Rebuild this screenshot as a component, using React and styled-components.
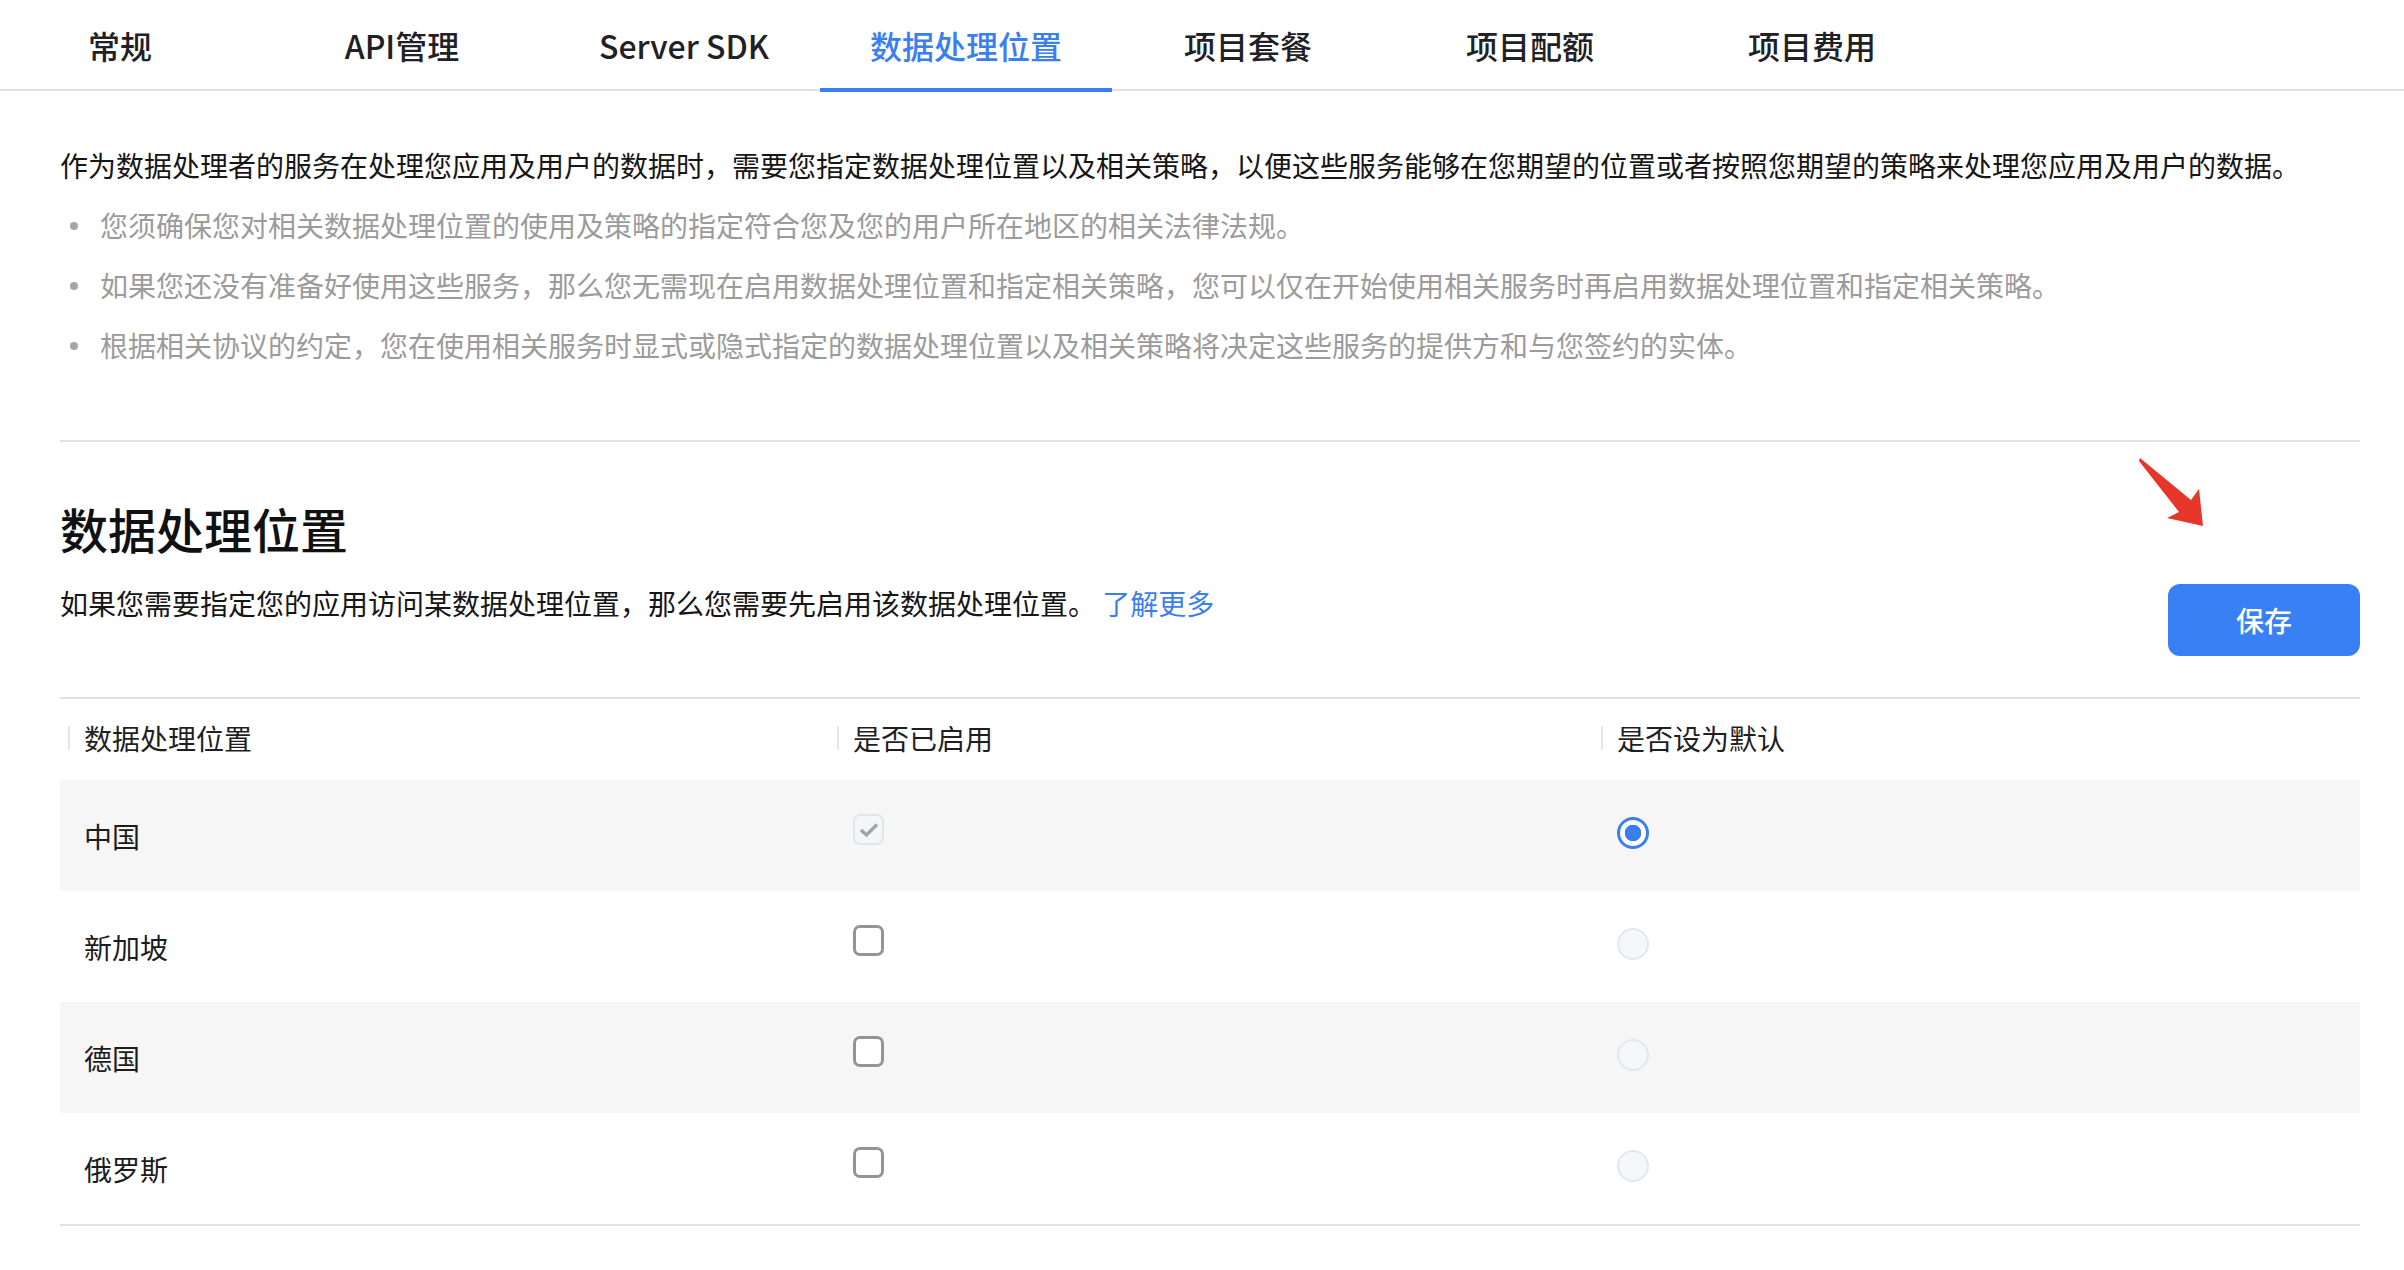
import React from "react";
import styled, { createGlobalStyle, css } from "styled-components";

const GlobalStyle = createGlobalStyle`
  html, body {
    margin: 0;
    padding: 0;
    background: #fff;
  }
  body {
    font-family: "Noto Sans CJK SC", "Noto Sans", sans-serif;
    color: #1f1f1f;
  }
  * {
    box-sizing: border-box;
  }
`;

const tabs = ["常规", "API管理", "Server SDK", "数据处理位置", "项目套餐", "项目配额", "项目费用"];

const bullets = [
  "您须确保您对相关数据处理位置的使用及策略的指定符合您及您的用户所在地区的相关法律法规。",
  "如果您还没有准备好使用这些服务，那么您无需现在启用数据处理位置和指定相关策略，您可以仅在开始使用相关服务时再启用数据处理位置和指定相关策略。",
  "根据相关协议的约定，您在使用相关服务时显式或隐式指定的数据处理位置以及相关策略将决定这些服务的提供方和与您签约的实体。",
];

const regions = [
  { name: "中国", enabled: true, locked: true, isDefault: true },
  { name: "新加坡", enabled: false },
  { name: "德国", enabled: false },
  { name: "俄罗斯", enabled: false },
];

const Checkbox = ({ checked, disabled }) => (
  <CheckBox $checked={checked} $disabled={disabled}>
    {checked && (
      <svg width="20" height="16" viewBox="0 0 20 16">
        <polyline points="2,8 7.5,13 18,2.5" fill="none" stroke="#a2a3a8" strokeWidth="3.4" />
      </svg>
    )}
  </CheckBox>
);

const App = () => {
  return (
    <>
      <GlobalStyle />
      <TabBar>
        <TabList>
          {tabs.map((t) => (
            <Tab key={t}>
              <TabLabel $active={t === "数据处理位置"}>{t}</TabLabel>
            </Tab>
          ))}
        </TabList>
      </TabBar>

      <Page>
        <Intro>
          作为数据处理者的服务在处理您应用及用户的数据时，需要您指定数据处理位置以及相关策略，以便这些服务能够在您期望的位置或者按照您期望的策略来处理您应用及用户的数据。
        </Intro>
        <NoteList>
          {bullets.map((b) => (
            <Note key={b}>{b}</Note>
          ))}
        </NoteList>

        <Divider />

        <SectionHead>
          <div>
            <Title>数据处理位置</Title>
            <Desc>
              如果您需要指定您的应用访问某数据处理位置，那么您需要先启用该数据处理位置。 <MoreLink href="#">了解更多</MoreLink>
            </Desc>
          </div>
          <SaveButton>保存</SaveButton>
          <Arrow width="75" height="80" viewBox="0 0 75 80">
            <polygon points="5,6 56,48 64,37 68,74 32,66 44,60 4,9" fill="#e8352a" />
          </Arrow>
        </SectionHead>

        <Table>
          <HeadRow>
            <HeadCell>数据处理位置</HeadCell>
            <HeadCell>是否已启用</HeadCell>
            <HeadCell>是否设为默认</HeadCell>
          </HeadRow>
          {regions.map((r, i) => (
            <Row key={r.name} $striped={i % 2 === 0}>
              <Cell>{r.name}</Cell>
              <Cell>
                <Checkbox checked={r.enabled} disabled={r.locked} />
              </Cell>
              <Cell>
                <Radio $checked={r.isDefault} />
              </Cell>
            </Row>
          ))}
        </Table>
      </Page>
    </>
  );
};

const TabBar = styled.nav`
  height: 91px;
  border-bottom: 2px solid #e2e2e2;
`;

const TabList = styled.div`
  display: flex;
  height: 89px;
  margin-left: -21px;
`;

const Tab = styled.div`
  flex: 0 0 282px;
  min-width: 0;
  display: flex;
  justify-content: center;
  height: 100%;
`;

const TabLabel = styled.div`
  position: relative;
  flex-shrink: 0;
  display: flex;
  align-items: center;
  height: 100%;
  padding: 0 50px;
  font-size: 32px;
  font-weight: 500;
  color: ${(p) => (p.$active ? "#3a7ef0" : "#1f2124")};
  white-space: nowrap;
  cursor: pointer;
  ${(p) =>
    p.$active &&
    css`
      &::after {
        content: "";
        position: absolute;
        left: 0;
        right: 0;
        bottom: -3px;
        height: 4px;
        background: #3a7ef0;
      }
    `}
`;

const Page = styled.main`
  padding: 54px 44px 40px 60px;
`;

const Intro = styled.p`
  margin: 0;
  font-size: 28px;
  line-height: 40px;
  color: #161616;
  white-space: nowrap;
`;

const NoteList = styled.ul`
  list-style: none;
  margin: 0;
  padding: 0 0 0 40px;
`;

const Note = styled.li`
  position: relative;
  margin-top: 20px;
  font-size: 28px;
  line-height: 40px;
  color: #9b9b9b;
  white-space: nowrap;
  &::before {
    content: "";
    position: absolute;
    left: -30px;
    top: 17px;
    width: 8px;
    height: 8px;
    border-radius: 50%;
    background: #a6a6a6;
  }
`;

const Divider = styled.hr`
  margin: 75px 0 0;
  border: 0;
  height: 2px;
  background: #e2e2e2;
`;

const SectionHead = styled.section`
  position: relative;
  display: flex;
  justify-content: space-between;
  align-items: flex-end;
  margin-top: 54px;
  margin-bottom: 41px;
`;

const Title = styled.h2`
  margin: 0;
  font-size: 48px;
  line-height: 64px;
  font-weight: 500;
  color: #111;
`;

const Desc = styled.p`
  margin: 23px 0 33px;
  font-size: 28px;
  line-height: 40px;
  color: #161616;
`;

const MoreLink = styled.a`
  color: #3a7ef0;
  text-decoration: none;
`;

const SaveButton = styled.button`
  width: 192px;
  height: 72px;
  border: 0;
  border-radius: 12px;
  background: #3880f4;
  color: #fff;
  font-family: inherit;
  font-size: 28px;
  font-weight: 500;
  cursor: pointer;
`;

const Arrow = styled.svg`
  position: absolute;
  top: -44px;
  right: 150px;
`;

const Table = styled.div`
  border-top: 2px solid #e2e2e2;
  border-bottom: 2px solid #e2e2e2;
`;

const gridCols = css`
  display: grid;
  grid-template-columns: 769px 764px 1fr;
`;

const HeadRow = styled.div`
  ${gridCols};
  height: 81px;
`;

const HeadCell = styled.div`
  position: relative;
  display: flex;
  align-items: center;
  padding: 0 0 4px 24px;
  font-size: 28px;
  color: #1f1f1f;
  &::before {
    content: "";
    position: absolute;
    left: 8px;
    top: 27px;
    width: 2px;
    height: 24px;
    background: #e6e6e6;
  }
`;

const Row = styled.div`
  ${gridCols};
  height: 111px;
  background: ${(p) => (p.$striped ? "#f6f6f6" : "#fff")};
`;

const Cell = styled.div`
  display: flex;
  align-items: center;
  padding-left: 24px;
  font-size: 28px;
  color: #1c1c1c;
`;

const CheckBox = styled.div`
  display: flex;
  align-items: center;
  justify-content: center;
  width: 31px;
  height: 31px;
  margin-bottom: 12px;
  border-radius: 7px;
  ${(p) =>
    p.$disabled
      ? css`
          border: 2px solid #e1e4ea;
          background: #f3f5f9;
        `
      : css`
          border: 3px solid #939498;
          background: #fff;
        `}
`;

const Radio = styled.div`
  width: 32px;
  height: 32px;
  margin-bottom: 6px;
  border-radius: 50%;
  ${(p) =>
    p.$checked
      ? css`
          border: 3px solid #3a7ef0;
          background: radial-gradient(circle, #3a7ef0 0 8px, #fff 8.5px);
        `
      : css`
          border: 2px solid #e3e6eb;
          background: #f4f6fa;
        `}
`;

export default App;
